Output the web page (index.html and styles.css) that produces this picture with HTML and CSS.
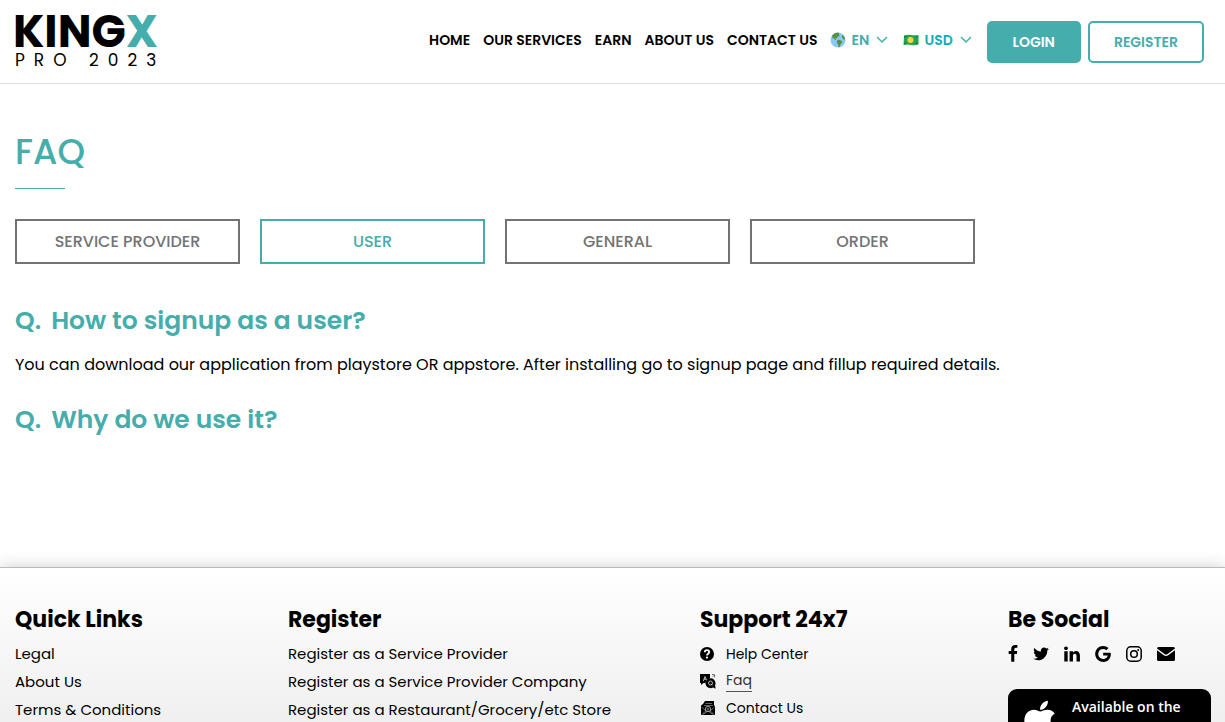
FILE: index.html
```
<!DOCTYPE html>
<html lang="en">

<head>
    <meta charset="UTF-8">
    <meta name="viewport" content="width=device-width, initial-scale=1.0">
    <title>FAQ - KingX Pro 2023</title>
    <link rel="stylesheet" href="styles.css">
</head>

<body>
    <header class="header">
        <a class="logo" href="#">
            <span class="logo-name">KING<span>X</span></span>
            <span class="logo-sub">PRO 2023</span>
        </a>
        <div class="header-right">
            <nav class="menu">
                <a href="#">HOME</a>
                <a href="#">OUR SERVICES</a>
                <a href="#">EARN</a>
                <a href="#">ABOUT US</a>
                <a href="#">CONTACT US</a>
            </nav>
            <div class="picker">
                <svg width="16" height="16" viewBox="0 0 16 16" aria-hidden="true">
                    <circle cx="8" cy="8" r="7.5" fill="#88c9f9" />
                    <path d="M2.300 3.300Q4.500.6 8 .5l1.300.8-.5 1.200 1 .9-1.200 1.200-1 .2-.7 1.400-1.800.1 1 1.200-.4.7-1.700-1.400-1.900-1.500zM7.500 7.700l2.600.2 2.200 1.500-.6 1.900-1.400 1.300-.4 2.300-1.200.3-.5-2.700-1.400-1.800zM12.300 3l1.500 1 1.200 2.400-.2 1.700-1.900-1.300-1.200-1.800z" fill="#5c913b" />
                </svg>
                <select aria-label="Language">
                    <option>EN</option>
                </select>
                <svg class="chevron" width="12" height="8" viewBox="0 0 12 8" aria-hidden="true">
                    <path d="M1 1l5 5 5-5" />
                </svg>
            </div>
            <div class="picker currency">
                <svg width="16" height="12" viewBox="0 0 16 12" aria-hidden="true">
                    <path d="M1 1.500Q4 .4 8 1t7.500 0v9.500q-3.500 1-7.500.4T.5 11z" fill="#22a652" />
                    <path d="M1 2l3 .2-2.500 2zM15 2l-3 .2 2.500 2zM1 10.200l3-.2-2.500-2zM15 10l-3-.2 2.500-2z" fill="#14813b" />
                    <circle cx="7.500" cy="6" r="3" fill="#ffd33a" />
                </svg>
                <select aria-label="Currency">
                    <option>USD</option>
                </select>
                <svg class="chevron" width="12" height="8" viewBox="0 0 12 8" aria-hidden="true">
                    <path d="M1 1l5 5 5-5" />
                </svg>
            </div>
            <div class="auth">
                <a class="btn btn-login" href="#">LOGIN</a>
                <a class="btn btn-register" href="#">REGISTER</a>
            </div>
        </div>
    </header>

    <main class="faq">
        <h1>FAQ</h1>
        <div class="tabs">
            <button class="tab" type="button">SERVICE PROVIDER</button>
            <button class="tab active" type="button">USER</button>
            <button class="tab" type="button">GENERAL</button>
            <button class="tab" type="button">ORDER</button>
        </div>
        <section>
            <h2><span>Q.</span>How to signup as a user?</h2>
            <p>You can download our application from playstore OR appstore. After installing go to signup page and fillup required details.</p>
            <h2><span>Q.</span>Why do we use it?</h2>
        </section>
    </main>

    <footer class="footer">
        <div>
            <h3>Quick Links</h3>
            <ul class="links">
                <li><a href="#">Legal</a></li>
                <li><a href="#">About Us</a></li>
                <li><a href="#">Terms &amp; Conditions</a></li>
            </ul>
        </div>
        <div>
            <h3>Register</h3>
            <ul class="links">
                <li><a href="#">Register as a Service Provider</a></li>
                <li><a href="#">Register as a Service Provider Company</a></li>
                <li><a href="#">Register as a Restaurant/Grocery/etc Store</a></li>
            </ul>
        </div>
        <div>
            <h3>Support 24x7</h3>
            <ul class="links support">
                <li>
                    <svg width="16" height="16" viewBox="0 0 16 16" aria-hidden="true">
                        <circle cx="7" cy="8" r="7" />
                        <path d="M4.800 6.200Q4.900 4.200 7 4.200t2.200 1.900Q9.200 7.300 8 7.900 7 8.400 7 9.500" fill="none" stroke="#fff" stroke-width="1.800" />
                        <circle cx="7" cy="11.600" r="1.100" fill="#fff" />
                    </svg>
                    <a href="#">Help Center</a>
                </li>
                <li>
                    <svg width="16" height="16" viewBox="0 0 16 16" aria-hidden="true">
                        <path d="M0 1h10v4.500Q5.500 6.500 5.500 10H3.500L1 12v-2H0z" />
                        <path d="M3.300 8L5 3.500 6.500 7M4 6.200h2" fill="none" stroke="#ddd" stroke-width=".8" />
                        <circle cx="10.500" cy="10.300" r="5" />
                        <path d="M12.500 14l3 1.800-.5-4z" />
                        <circle cx="10.500" cy="10" r="2" fill="none" stroke="#ddd" stroke-width=".8" />
                        <path d="M11 10.800l1.600 1.600" stroke="#ddd" stroke-width=".8" />
                        <path d="M12 1.500l2.500.3.200 2.500M13 3.500l1-1" fill="none" stroke="#000" stroke-width=".6" />
                    </svg>
                    <a class="current" href="#">Faq</a>
                </li>
                <li>
                    <svg width="16" height="16" viewBox="0 0 16 16" aria-hidden="true">
                        <path d="M1 5.500L3 4l2-3h9v4l1 1.500V15H1z" />
                        <path d="M5.500 3.500H12M4 5.500h9M1.500 7L6 11l-4.500 3.500M14.500 7L10 11l4.500 3.500M3 14.500L8 11l5 3.500" fill="none" stroke="#ccc" stroke-width=".5" />
                        <circle cx="8" cy="9" r="2.700" fill="none" stroke="#ccc" stroke-width=".7" />
                        <circle cx="8" cy="9" r="1" fill="none" stroke="#ccc" stroke-width=".5" />
                    </svg>
                    <a href="#">Contact Us</a>
                </li>
            </ul>
        </div>
        <div>
            <h3>Be Social</h3>
            <div class="social">
                <a href="#" aria-label="Facebook">
                    <svg width="10" height="18" viewBox="460 0 900 1792">
                        <path d="M1343 12v264h-157q-86 0-116 36t-30 108v189h293l-39 296h-254v759h-306v-759h-255v-296h255v-218q0-186 104-288.500t277-102.500q147 0 228 12z" />
                    </svg>
                </a>
                <a href="#" aria-label="Twitter">
                    <svg width="16" height="18" viewBox="90 90 1610 1650">
                        <path d="M1684 408q-67 98-162 167 1 14 1 42 0 130-38 259.500t-115.500 248.500-184.500 210.500-258 146-323 54.500q-271 0-496-145 35 4 78 4 225 0 401-138-105-2-188-64.500t-114-159.500q33 5 61 5 43 0 85-11-112-23-185.500-111.500t-73.500-205.500v-4q68 38 146 41-66-44-105-115t-39-154q0-88 44-163 121 149 294.500 238.500t371.500 99.500q-8-38-8-74 0-134 94.500-228.500t228.500-94.500q140 0 236 102 109-21 205-78-37 115-142 178 93-10 186-50z" />
                    </svg>
                </a>
                <a href="#" aria-label="LinkedIn">
                    <svg width="16" height="18" viewBox="120 60 1550 1650">
                        <path d="M477 625v991h-330v-991h330zm21-306q1 73-50.500 122t-135.500 49h-2q-82 0-132-49t-50-122q0-74 51.500-122.500t134.500-48.500 133 48.500 51 122.500zm1166 729v568h-329v-530q0-105-40.500-164.500t-126.500-59.500q-63 0-105.500 34.500t-63.500 85.500q-11 30-11 81v553h-329q2-399 2-647t-1-296l-1-48h329v144h-2q20-32 41-56t56.500-52 87-43.500 114.500-15.500q171 0 275 113.500t104 332.500z" />
                    </svg>
                </a>
                <a href="#" aria-label="Google">
                    <svg width="16" height="18" viewBox="110 50 1540 1700">
                        <path d="M896 786h725q12 67 12 128 0 217-91 387.500t-259.500 266.500-386.500 96q-157 0-299-60.500t-245-163.500-163.500-245-60.500-299 60.500-299 163.500-245 245-163.500 299-60.500q300 0 515 201l-209 201q-123-119-306-119-129 0-238.500 65t-173.500 176.500-64 243.500 64 243.500 173.500 176.500 238.500 65q87 0 160-24t120-60 82-82 51.500-87 22.500-78h-436v-264z" />
                    </svg>
                </a>
                <a href="#" aria-label="Instagram">
                    <svg width="16" height="18" viewBox="0 0 16 18">
                        <rect x=".8" y="1.800" width="14.400" height="14.400" rx="4" fill="none" stroke="#000" stroke-width="1.500" />
                        <circle cx="8" cy="9" r="3.300" fill="none" stroke="#000" stroke-width="1.500" />
                        <circle cx="12.200" cy="4.900" r="1" />
                    </svg>
                </a>
                <a href="#" aria-label="Email">
                    <svg width="18" height="18" viewBox="0 0 18 18">
                        <path d="M1.500 2h15Q18 2 18 3.500L10.500 9Q9 10 7.500 9L0 3.500Q0 2 1.500 2zM0 5.300l6.800 5Q9 11.800 11.200 10.300L18 5.300V14.500Q18 16 16.500 16h-15Q0 16 0 14.500z" />
                    </svg>
                </a>
            </div>
            <a class="store" href="#">
                <svg width="32" height="43" viewBox="0 0 384 512" aria-hidden="true">
                    <path d="M318.700 268.700c-.2-36.700 16.400-64.400 50-84.800-18.800-26.900-47.200-41.700-84.700-44.600-35.500-2.800-74.300 20.700-88.500 20.700-15 0-49.400-19.700-76.400-19.700C63.300 141.200 4 184.800 4 273.500q0 39.300 14.400 81.200c12.800 36.700 59 126.700 107.200 125.200 25.200-.6 43-17.900 75.800-17.900 31.800 0 48.300 17.900 76.400 17.900 48.600-.7 90.400-82.500 102.600-119.300-65.200-30.700-61.700-90-61.700-91.900zm-56.600-164.200c27.300-32.400 24.800-61.900 24-72.500-24.100 1.400-52 16.400-67.900 34.900-17.500 19.800-27.800 44.300-25.600 71.900 26.100 2 49.900-11.400 69.500-34.300z" />
                </svg>
                <span class="store-text">
                    <small>Available on the</small>
                    <strong>App Store</strong>
                </span>
            </a>
        </div>
    </footer>
</body>

</html>
```

FILE: styles.css
```
* {
    box-sizing: border-box;
}

body {
    font-family: Poppins, Inter, sans-serif;
    margin: 0;
    height: 100vh;
    overflow: hidden;
    background-color: #fff;
    color: #000;
}

a {
    color: inherit;
    text-decoration: none;
}

/* Header */
.header {
    display: flex;
    justify-content: space-between;
    align-items: flex-start;
    padding: 12px 21px 14px 15px;
    border-bottom: 1px solid #ddd;
}

.logo {
    display: flex;
    flex-direction: column;
}

.logo-name {
    margin-left: -2px;
    font-size: 45px;
    font-weight: 700;
    line-height: 39px;
}

.logo-name span {
    color: #45adac;
}

.logo-sub {
    font-size: 17px;
    line-height: 18px;
    letter-spacing: 9px;
}

.header-right {
    display: flex;
    align-items: center;
    padding-top: 9px;
}

.menu {
    display: flex;
    gap: 13px;
    margin-right: 12px;
    font-size: 14px;
    font-weight: 600;
    line-height: 38px;
    padding-bottom: 4px;
}

.picker {
    display: flex;
    align-items: center;
    gap: 6px;
    margin-right: 15px;
    padding-bottom: 4px;
    color: #45adac;
}

.picker select {
    appearance: none;
    border: none;
    background: none;
    padding: 0;
    font: inherit;
    font-size: 14px;
    font-weight: 600;
    color: inherit;
}

.currency {
    color: #10adb4;
}

.chevron path {
    fill: none;
    stroke: #45adac;
    stroke-width: 1.5;
}

.auth {
    display: flex;
    gap: 7px;
}

.btn {
    border: 2px solid #45adac;
    border-radius: 5px;
    padding: 0 24px;
    font-size: 14px;
    font-weight: 600;
    line-height: 38px;
}

.btn-login {
    background-color: #45adac;
    color: #fff;
}

.btn-register {
    color: #45adac;
}

/* FAQ content */
.faq {
    padding: 42px 15px 127px;
}

.faq h1 {
    margin: 0 0 30px;
    font-size: 35px;
    font-weight: 500;
    line-height: 52px;
    color: #45adac;
}

.faq h1::after {
    content: "";
    display: block;
    width: 50px;
    height: 1px;
    margin-top: 10px;
    background-color: #45adac;
}

.tabs {
    display: flex;
    flex-wrap: wrap;
    gap: 20px;
    margin-bottom: 37px;
}

.tab {
    width: 225px;
    height: 45px;
    border: 2px solid #727374;
    background: none;
    font: inherit;
    font-size: 16px;
    font-weight: 500;
    color: #727374;
    cursor: pointer;
}

.tab.active {
    border-color: #45adac;
    color: #45adac;
}

.faq h2 {
    margin: 0;
    font-size: 25px;
    font-weight: 600;
    line-height: 40px;
    color: #45adac;
}

.faq h2 span {
    margin-right: 10px;
}

.faq p {
    margin: 12px 0 23px;
    font-size: 16px;
    line-height: 24px;
}

/* Footer */
.footer {
    display: grid;
    grid-template-columns: 273fr 412fr 308fr 203px;
    padding: 35px 14px 35px 15px;
    border-top: 1px solid #bbb;
    background: linear-gradient(#fff, #efefef 160px);
    box-shadow: 0 0 15px rgba(0, 0, 0, 0.2);
}

.footer h3 {
    margin: 0 0 4px;
    font-size: 22px;
    font-weight: 700;
    line-height: 33px;
}

.links {
    list-style: none;
    margin: 0;
    padding: 0;
    font-size: 15px;
    line-height: 28px;
}

.support {
    font-size: 14px;
}

.support li {
    display: flex;
    align-items: center;
    gap: 10px;
    height: 27px;
}

.support .current {
    border-bottom: 1px solid #555;
    color: #333;
    line-height: 22px;
}

.social {
    display: flex;
    align-items: center;
    gap: 15px;
    height: 28px;
    margin-bottom: 21px;
}

.social a {
    display: flex;
}

.store {
    display: flex;
    gap: 16px;
    padding: 9px 16px;
    border-radius: 9px;
    background-color: #000;
    color: #fff;
    font-family: "Open Sans", sans-serif;
    white-space: nowrap;
}

.store svg {
    flex: none;
    fill: #fff;
}

.store-text {
    display: flex;
    flex-direction: column;
}

.store small {
    font-size: 14px;
    font-weight: 600;
    line-height: 18px;
}

.store strong {
    font-size: 24px;
    line-height: 30px;
}
```
